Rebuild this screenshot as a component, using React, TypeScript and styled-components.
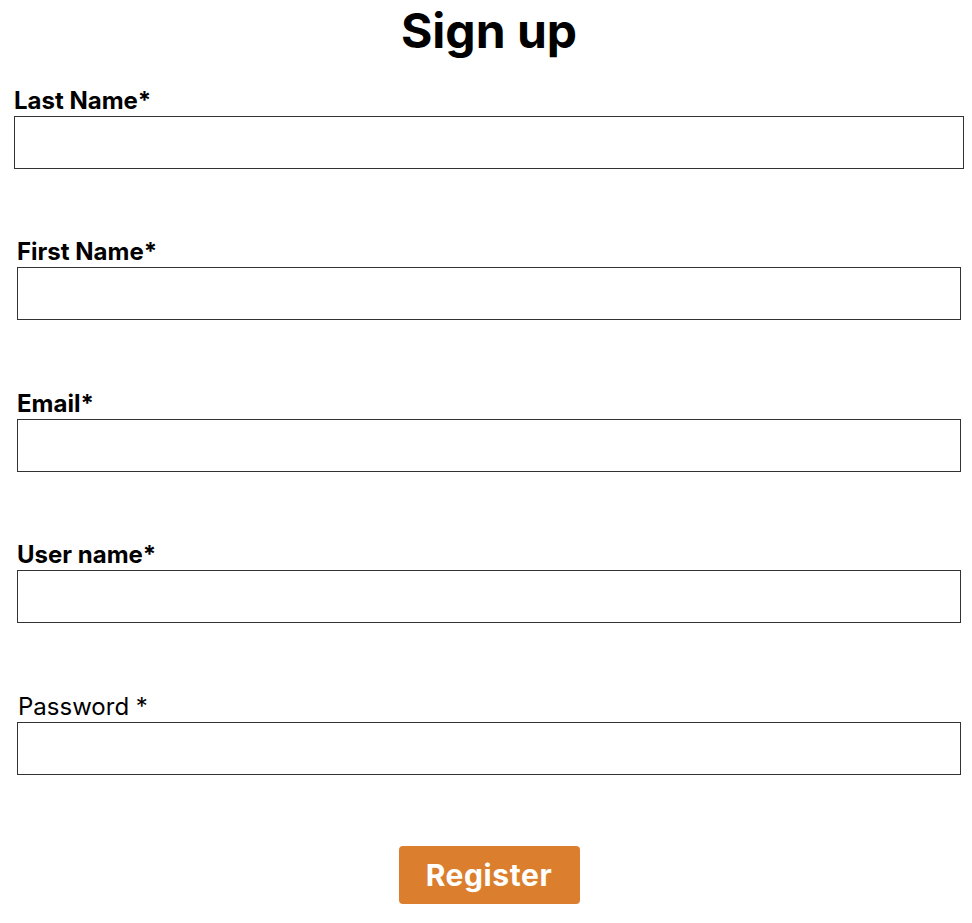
import styled, { createGlobalStyle } from 'styled-components'

const GlobalStyle = createGlobalStyle`
  body {
    margin: 0;
    background: #fff;
    font-family: Inter, "Noto Sans", sans-serif;
    color: #000;
  }
`

const Page = styled.main`
  display: flex;
  flex-direction: column;
  padding: 0 8px 0 14px;
`

const Title = styled.h1`
  margin: 0;
  text-align: center;
  font-size: 48px;
  font-weight: 700;
  line-height: 62px;
`

const Form = styled.form`
  display: flex;
  flex-direction: column;
  gap: 69.4px;
  margin-top: 25px;
`

const Field = styled.div<{ $wide?: boolean }>`
  display: flex;
  flex-direction: column;
  padding: ${(p) => (p.$wide ? '0' : '0 3px')};
`

const Label = styled.label<{ $plain?: boolean }>`
  display: block;
  font-size: 24px;
  line-height: 28px;
  font-weight: ${(p) => (p.$plain ? 400 : 700)};
  margin-bottom: 1px;
  padding-left: ${(p) => (p.$plain ? '1px' : '0')};
`

const Input = styled.input`
  box-sizing: border-box;
  width: 100%;
  height: 53px;
  border: 1px solid #333;
  border-radius: 0;
  padding: 0 10px;
  font-size: 18px;
  font-family: inherit;
  outline: none;
`

const Actions = styled.div`
  display: flex;
  justify-content: center;
  margin-top: 71px;
`

const Button = styled.button`
  width: 181px;
  height: 58px;
  border: none;
  border-radius: 4px;
  background: #db7f2e;
  color: #fff;
  font-family: Inter, "Noto Sans", sans-serif;
  font-size: 30px;
  font-weight: 700;
  letter-spacing: 0.6px;
  cursor: pointer;
`

const fields = [
  { label: 'Last Name*', type: 'text', wide: true },
  { label: 'First Name*', type: 'text' },
  { label: 'Email*', type: 'email' },
  { label: 'User name*', type: 'text' },
  { label: 'Password *', type: 'password', plain: true },
]

export default function App() {
  return (
    <Page>
      <GlobalStyle />
      <Title>Sign up</Title>
      <Form onSubmit={(e) => e.preventDefault()}>
        {fields.map((f) => (
          <Field key={f.label} $wide={f.wide}>
            <Label $plain={f.plain}>{f.label}</Label>
            <Input type={f.type} />
          </Field>
        ))}
      </Form>
      <Actions>
        <Button type="submit">Register</Button>
      </Actions>
    </Page>
  )
}
